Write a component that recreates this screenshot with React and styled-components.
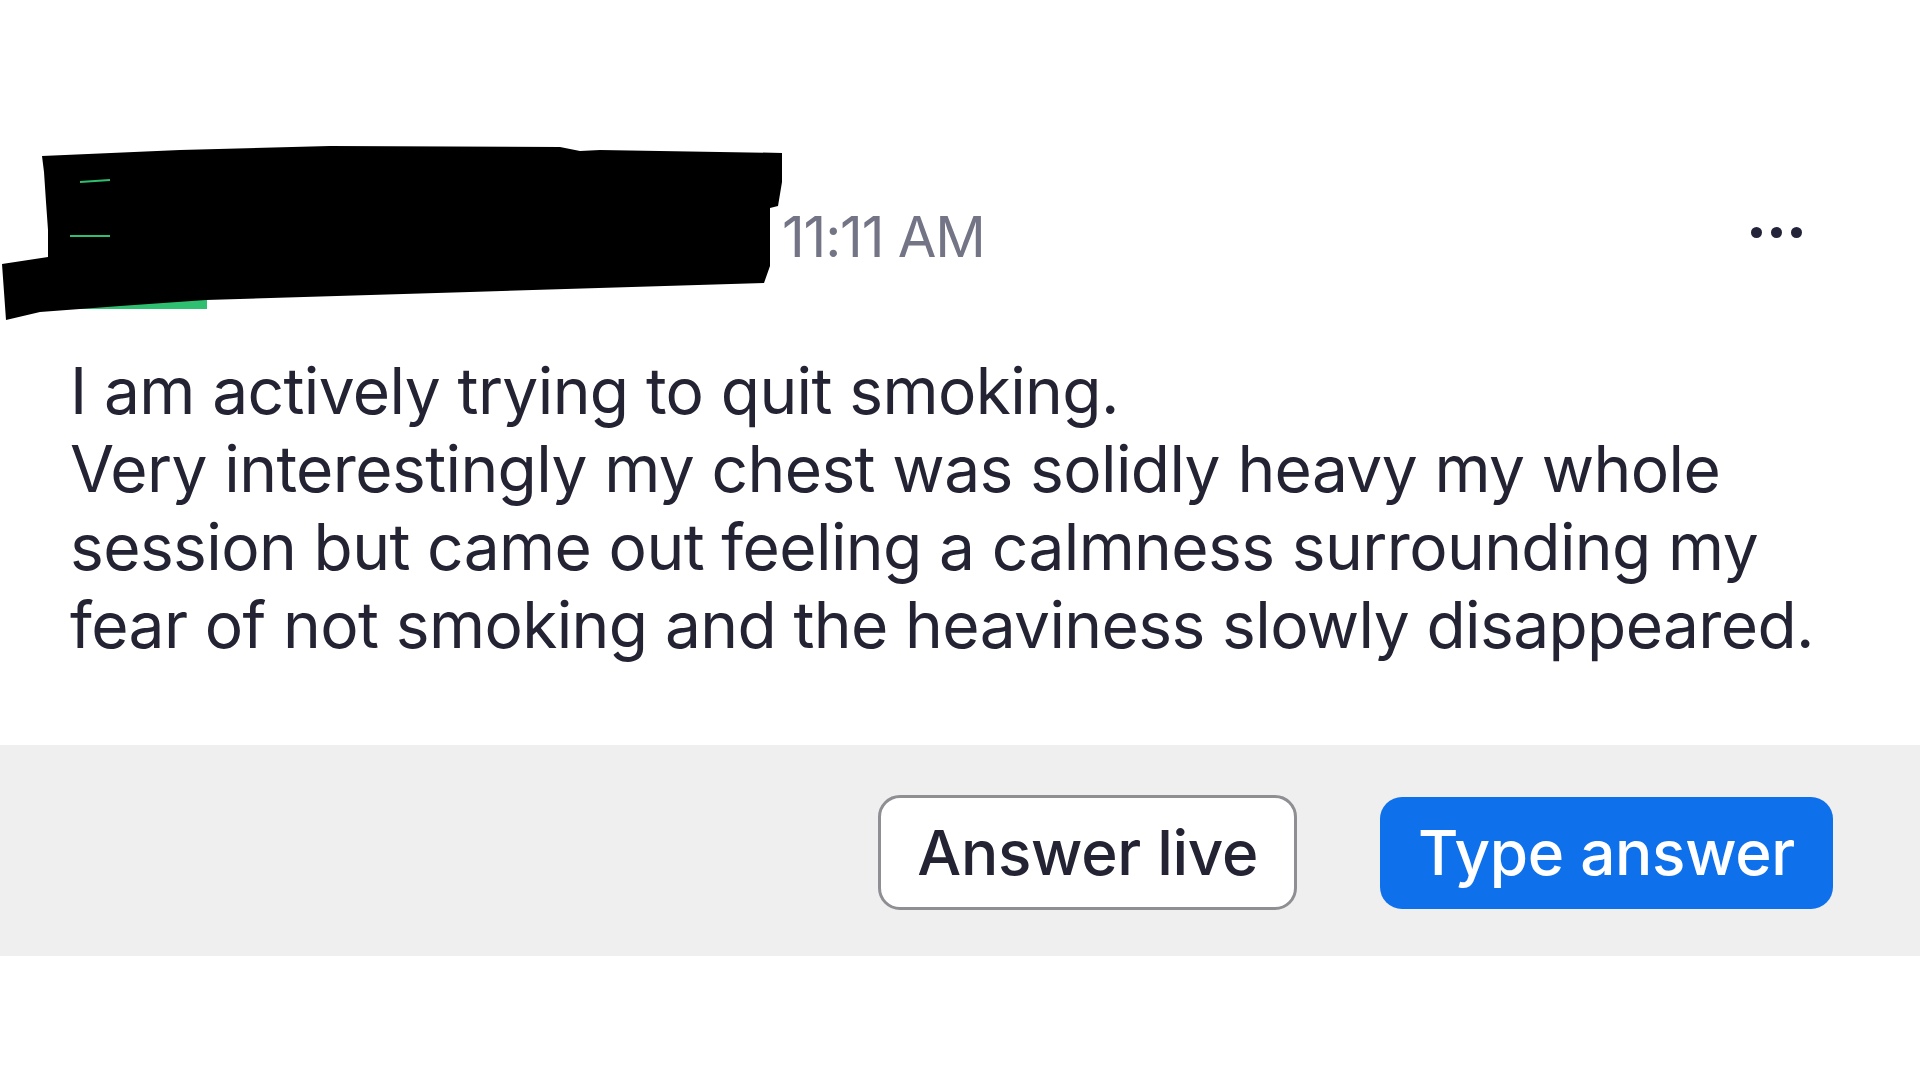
import React from 'react';
import styled, { createGlobalStyle } from 'styled-components';

const GlobalStyle = createGlobalStyle`
  body {
    margin: 0;
    background: #ffffff;
    font-family: Inter, "Noto Sans", "Liberation Sans", sans-serif;
  }
`;

const Page = styled.main`
  width: 1920px;
  height: 1080px;
  display: flex;
  flex-direction: column;
  background: #ffffff;
`;

const Message = styled.section`
  padding: 142px 118px 0 0;
`;

const Header = styled.div`
  display: flex;
  align-items: center;
  height: 180px;
`;

const Redaction = styled.svg`
  display: block;
  flex-shrink: 0;
`;

const Time = styled.span`
  font-size: 56px;
  color: #747487;
  letter-spacing: -1.2px;
  margin-left: 0;
  padding-top: 10px;
`;

const Spacer = styled.div`
  flex: 1;
`;

const MoreButton = styled.button`
  display: flex;
  gap: 9px;
  padding: 0;
  border: none;
  background: none;
  cursor: pointer;
`;

const Dot = styled.span`
  width: 11px;
  height: 11px;
  border-radius: 50%;
  background: #23233a;
`;

const Body = styled.p`
  margin: 30px 0 0 70px;
  font-size: 64px;
  line-height: 78px;
  color: #232333;
  letter-spacing: -0.6px;
  white-space: nowrap;
`;

const ActionBar = styled.div`
  margin-top: 81px;
  height: 211px;
  background: #efefef;
  display: flex;
  justify-content: flex-end;
  align-items: center;
  gap: 83px;
  padding-right: 87px;
`;

const Button = styled.button`
  height: ${p => (p.$primary ? '112px' : '115px')};
  padding: 0 ${p => (p.$primary ? '38px' : '36px')};
  margin-top: 4px;
  border-radius: 22px;
  border: ${p => (p.$primary ? 'none' : '3px solid #8e8e93')};
  background: ${p => (p.$primary ? '#0e71eb' : '#ffffff')};
  color: ${p => (p.$primary ? '#ffffff' : '#232333')};
  font-family: Inter, "Noto Sans", "Liberation Sans", sans-serif;
  font-size: 62px;
  font-weight: 500;
  letter-spacing: -0.3px;
  cursor: pointer;
`;

// black marker over the sender's name, with the avatar's green edge peeking out
const NameRedaction = () => (
  <Redaction width="782" height="180" viewBox="0 0 782 180">
    <rect x="77" y="155" width="130" height="12" fill="#2fbf71" />
    <polygon
      fill="#000"
      points="42,14 180,8 330,4 560,5 580,9 600,8 786,11 782,40 778,64 770,66 770,124 764,141 470,150 206,158 120,164 40,170 6,178 2,122 48,115 48,88 46,60 44,30"
    />
    <path d="M80 40 L110 38" stroke="#2fbf71" strokeWidth="2" />
    <path d="M70 94 L110 94" stroke="#2fbf71" strokeWidth="2" />
  </Redaction>
);

const App = () => (
  <>
    <GlobalStyle />
    <Page>
      <Message>
        <Header>
          <NameRedaction />
          <Time>11:11 AM</Time>
          <Spacer />
          <MoreButton aria-label="More">
            <Dot />
            <Dot />
            <Dot />
          </MoreButton>
        </Header>
        <Body>
          I am actively trying to quit smoking.
          <br />
          Very interestingly my chest was solidly heavy my whole
          <br />
          session but came out feeling a calmness surrounding my
          <br />
          fear of not smoking and the heaviness slowly disappeared.
        </Body>
      </Message>
      <ActionBar>
        <Button>Answer live</Button>
        <Button $primary>Type answer</Button>
      </ActionBar>
    </Page>
  </>
);

export default App;
